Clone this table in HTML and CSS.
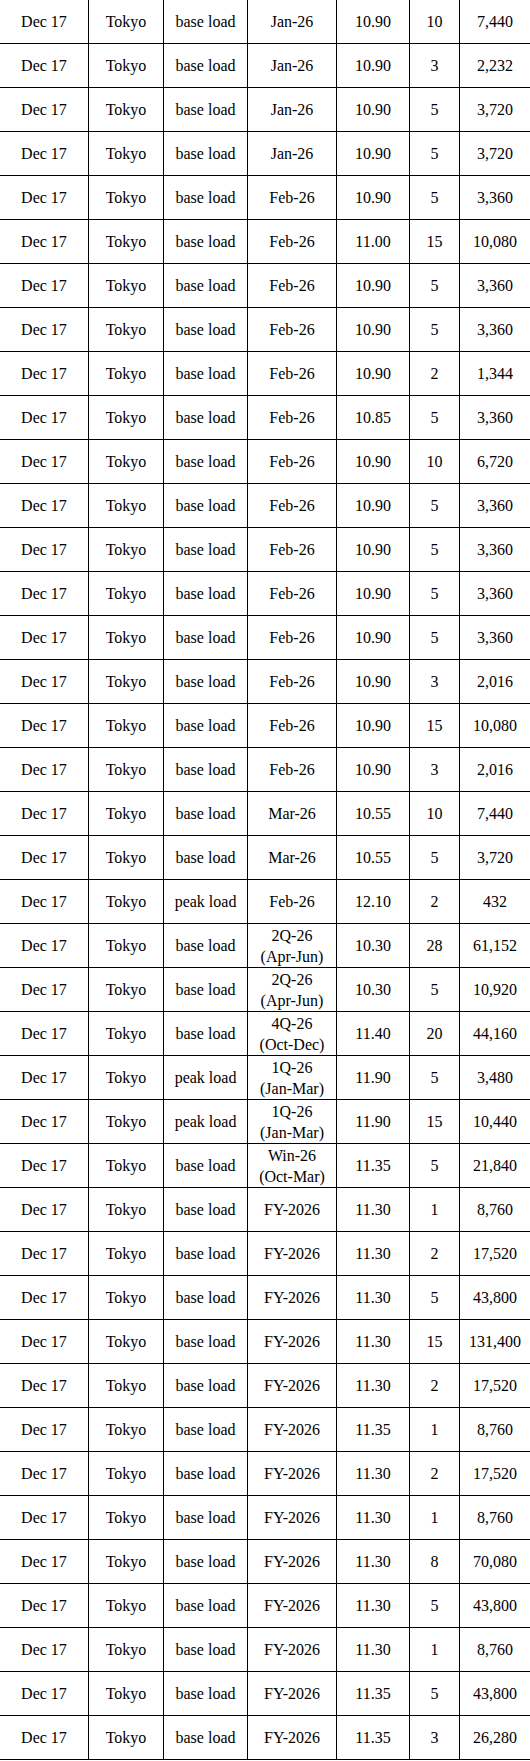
FILE: index.html
```html
<!DOCTYPE html>
<html>
<head>
<meta charset="utf-8">
<link rel="stylesheet" href="styles.css">
</head>
<body>
<table class="trades">
<colgroup>
<col class="c-date"><col class="c-area"><col class="c-load"><col class="c-period"><col class="c-price"><col class="c-qty"><col class="c-vol">
</colgroup>
<tbody>
<tr><td>Dec 17</td><td>Tokyo</td><td>base load</td><td>Jan-26</td><td>10.90</td><td>10</td><td>7,440</td></tr>
<tr><td>Dec 17</td><td>Tokyo</td><td>base load</td><td>Jan-26</td><td>10.90</td><td>3</td><td>2,232</td></tr>
<tr><td>Dec 17</td><td>Tokyo</td><td>base load</td><td>Jan-26</td><td>10.90</td><td>5</td><td>3,720</td></tr>
<tr><td>Dec 17</td><td>Tokyo</td><td>base load</td><td>Jan-26</td><td>10.90</td><td>5</td><td>3,720</td></tr>
<tr><td>Dec 17</td><td>Tokyo</td><td>base load</td><td>Feb-26</td><td>10.90</td><td>5</td><td>3,360</td></tr>
<tr><td>Dec 17</td><td>Tokyo</td><td>base load</td><td>Feb-26</td><td>11.00</td><td>15</td><td>10,080</td></tr>
<tr><td>Dec 17</td><td>Tokyo</td><td>base load</td><td>Feb-26</td><td>10.90</td><td>5</td><td>3,360</td></tr>
<tr><td>Dec 17</td><td>Tokyo</td><td>base load</td><td>Feb-26</td><td>10.90</td><td>5</td><td>3,360</td></tr>
<tr><td>Dec 17</td><td>Tokyo</td><td>base load</td><td>Feb-26</td><td>10.90</td><td>2</td><td>1,344</td></tr>
<tr><td>Dec 17</td><td>Tokyo</td><td>base load</td><td>Feb-26</td><td>10.85</td><td>5</td><td>3,360</td></tr>
<tr><td>Dec 17</td><td>Tokyo</td><td>base load</td><td>Feb-26</td><td>10.90</td><td>10</td><td>6,720</td></tr>
<tr><td>Dec 17</td><td>Tokyo</td><td>base load</td><td>Feb-26</td><td>10.90</td><td>5</td><td>3,360</td></tr>
<tr><td>Dec 17</td><td>Tokyo</td><td>base load</td><td>Feb-26</td><td>10.90</td><td>5</td><td>3,360</td></tr>
<tr><td>Dec 17</td><td>Tokyo</td><td>base load</td><td>Feb-26</td><td>10.90</td><td>5</td><td>3,360</td></tr>
<tr><td>Dec 17</td><td>Tokyo</td><td>base load</td><td>Feb-26</td><td>10.90</td><td>5</td><td>3,360</td></tr>
<tr><td>Dec 17</td><td>Tokyo</td><td>base load</td><td>Feb-26</td><td>10.90</td><td>3</td><td>2,016</td></tr>
<tr><td>Dec 17</td><td>Tokyo</td><td>base load</td><td>Feb-26</td><td>10.90</td><td>15</td><td>10,080</td></tr>
<tr><td>Dec 17</td><td>Tokyo</td><td>base load</td><td>Feb-26</td><td>10.90</td><td>3</td><td>2,016</td></tr>
<tr><td>Dec 17</td><td>Tokyo</td><td>base load</td><td>Mar-26</td><td>10.55</td><td>10</td><td>7,440</td></tr>
<tr><td>Dec 17</td><td>Tokyo</td><td>base load</td><td>Mar-26</td><td>10.55</td><td>5</td><td>3,720</td></tr>
<tr><td>Dec 17</td><td>Tokyo</td><td>peak load</td><td>Feb-26</td><td>12.10</td><td>2</td><td>432</td></tr>
<tr><td>Dec 17</td><td>Tokyo</td><td>base load</td><td>2Q-26<br>(Apr-Jun)</td><td>10.30</td><td>28</td><td>61,152</td></tr>
<tr><td>Dec 17</td><td>Tokyo</td><td>base load</td><td>2Q-26<br>(Apr-Jun)</td><td>10.30</td><td>5</td><td>10,920</td></tr>
<tr><td>Dec 17</td><td>Tokyo</td><td>base load</td><td>4Q-26<br>(Oct-Dec)</td><td>11.40</td><td>20</td><td>44,160</td></tr>
<tr><td>Dec 17</td><td>Tokyo</td><td>peak load</td><td>1Q-26<br>(Jan-Mar)</td><td>11.90</td><td>5</td><td>3,480</td></tr>
<tr><td>Dec 17</td><td>Tokyo</td><td>peak load</td><td>1Q-26<br>(Jan-Mar)</td><td>11.90</td><td>15</td><td>10,440</td></tr>
<tr><td>Dec 17</td><td>Tokyo</td><td>base load</td><td>Win-26<br>(Oct-Mar)</td><td>11.35</td><td>5</td><td>21,840</td></tr>
<tr><td>Dec 17</td><td>Tokyo</td><td>base load</td><td>FY-2026</td><td>11.30</td><td>1</td><td>8,760</td></tr>
<tr><td>Dec 17</td><td>Tokyo</td><td>base load</td><td>FY-2026</td><td>11.30</td><td>2</td><td>17,520</td></tr>
<tr><td>Dec 17</td><td>Tokyo</td><td>base load</td><td>FY-2026</td><td>11.30</td><td>5</td><td>43,800</td></tr>
<tr><td>Dec 17</td><td>Tokyo</td><td>base load</td><td>FY-2026</td><td>11.30</td><td>15</td><td>131,400</td></tr>
<tr><td>Dec 17</td><td>Tokyo</td><td>base load</td><td>FY-2026</td><td>11.30</td><td>2</td><td>17,520</td></tr>
<tr><td>Dec 17</td><td>Tokyo</td><td>base load</td><td>FY-2026</td><td>11.35</td><td>1</td><td>8,760</td></tr>
<tr><td>Dec 17</td><td>Tokyo</td><td>base load</td><td>FY-2026</td><td>11.30</td><td>2</td><td>17,520</td></tr>
<tr><td>Dec 17</td><td>Tokyo</td><td>base load</td><td>FY-2026</td><td>11.30</td><td>1</td><td>8,760</td></tr>
<tr><td>Dec 17</td><td>Tokyo</td><td>base load</td><td>FY-2026</td><td>11.30</td><td>8</td><td>70,080</td></tr>
<tr><td>Dec 17</td><td>Tokyo</td><td>base load</td><td>FY-2026</td><td>11.30</td><td>5</td><td>43,800</td></tr>
<tr><td>Dec 17</td><td>Tokyo</td><td>base load</td><td>FY-2026</td><td>11.30</td><td>1</td><td>8,760</td></tr>
<tr><td>Dec 17</td><td>Tokyo</td><td>base load</td><td>FY-2026</td><td>11.35</td><td>5</td><td>43,800</td></tr>
<tr><td>Dec 17</td><td>Tokyo</td><td>base load</td><td>FY-2026</td><td>11.35</td><td>3</td><td>26,280</td></tr>
</tbody>
</table>
</body>
</html>
```

FILE: styles.css
```css
html, body {
  margin: 0;
  padding: 0;
  background: #ffffff;
}

body {
  font-family: "Liberation Serif", "DejaVu Serif", serif;
  font-size: 16px;
  color: #000000;
}

.trades {
  width: 530px;
  table-layout: fixed;
  border-collapse: separate;
  border-spacing: 0;
}

.c-date { width: 89px; }
.c-area { width: 75px; }
.c-load { width: 84px; }
.c-period { width: 89px; }
.c-price { width: 73px; }
.c-qty { width: 50px; }
.c-vol { width: 70px; }

.trades td {
  height: 43px;
  padding: 0;
  text-align: center;
  vertical-align: middle;
  line-height: 21px;
  white-space: nowrap;
  border-right: 1px solid #000000;
  border-bottom: 1px solid #000000;
}

.trades td:last-child {
  border-right: none;
}
```
